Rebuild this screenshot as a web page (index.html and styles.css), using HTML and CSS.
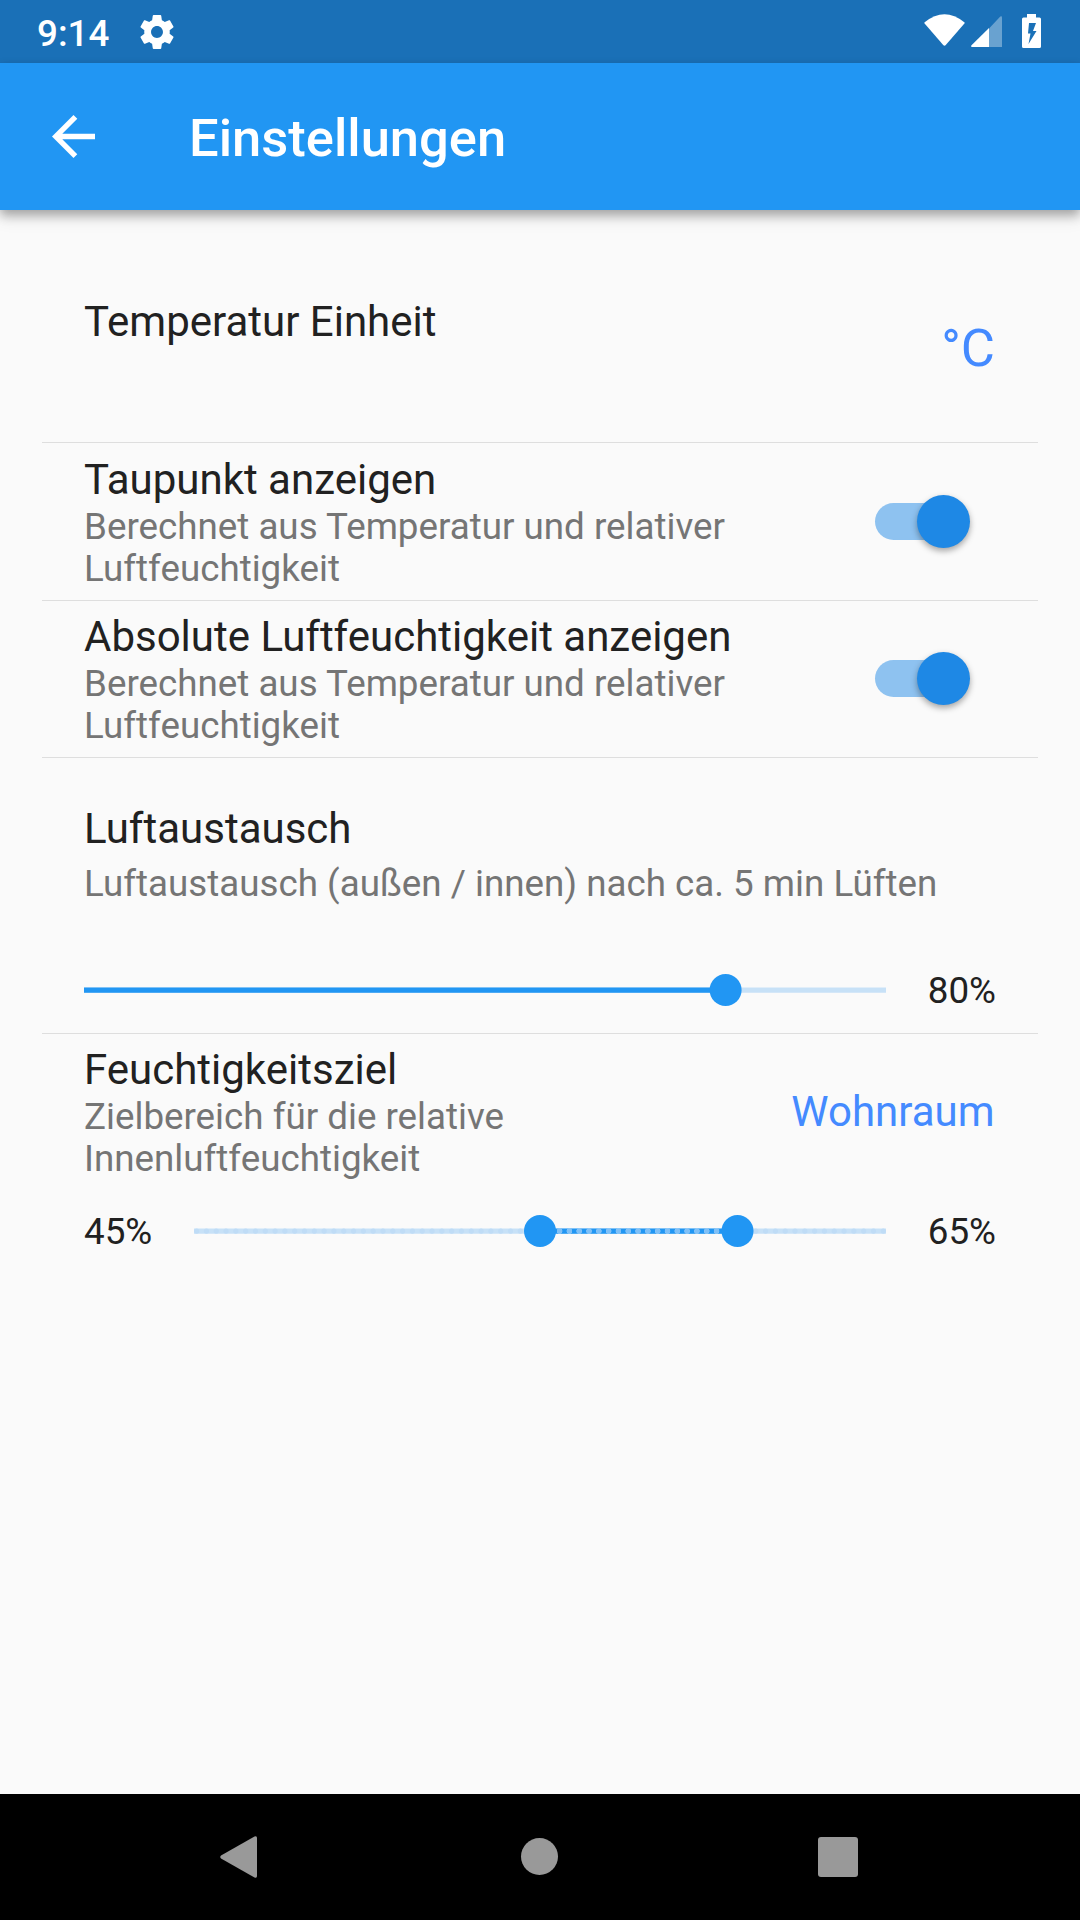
FILE: index.html
```html
<!DOCTYPE html>
<html lang="de">
<head>
<meta charset="utf-8">
<title>Einstellungen</title>
<link rel="stylesheet" href="styles.css">
</head>
<body>
<div class="status-bar">
  <span class="clock">9:14</span>
  <svg class="gear" viewBox="2 2 20 20"><path fill="#fff" d="M19.43 12.98c.04-.32.07-.64.07-.98s-.03-.66-.07-.98l2.11-1.65c.19-.15.24-.42.12-.64l-2-3.46c-.12-.22-.39-.3-.61-.22l-2.49 1c-.52-.4-1.08-.73-1.69-.98l-.38-2.65C14.46 2.18 14.25 2 14 2h-4c-.25 0-.46.18-.49.42l-.38 2.65c-.61.25-1.17.59-1.69.98l-2.49-1c-.23-.09-.49 0-.61.22l-2 3.46c-.13.22-.07.49.12.64l2.11 1.65c-.04.32-.07.65-.07.98s.03.66.07.98l-2.11 1.65c-.19.15-.24.42-.12.64l2 3.46c.12.22.39.3.61.22l2.49-1c.52.4 1.08.73 1.69.98l.38 2.65c.03.24.24.42.49.42h4c.25 0 .46-.18.49-.42l.38-2.65c.61-.25 1.17-.59 1.69-.98l2.49 1c.23.09.49 0 .61-.22l2-3.46c.12-.22.07-.49-.12-.64l-2.11-1.65zM12 15.500c-1.930 0-3.500-1.570-3.500-3.500s1.570-3.500 3.500-3.500 3.500 1.570 3.500 3.500-1.570 3.500-3.500 3.500z"/></svg>
  <svg class="wifi" viewBox="0 0 41 32"><path fill="#fff" d="M.7 8.200Q20.500-7.800 40.300 8.200Q41 8.800 40.400 9.600L21.800 31Q20.500 32.300 19.200 31L.6 9.600Q0 8.800.7 8.200Z"/></svg>
  <svg class="signal" viewBox="0 0 31 31"><path fill="#fff" fill-opacity=".35" d="M18 12.500L29.300 .5Q31-.5 31 1.500V31H18Z"/><path fill="#fff" d="M18 12V31H1Q-.6 30.500.5 29.300Z"/></svg>
  <svg class="battery" viewBox="0 0 19 34"><path fill="#fff" fill-rule="evenodd" d="M5 0H14V3.500H17.500Q19 3.500 19 5V32.500Q19 34 17.500 34H1.500Q0 34 0 32.500V5Q0 3.500 1.500 3.500H5ZM7 9L6 19.500H8.500L6.500 30L14.500 17H11L14 9Z"/></svg>
</div>
<header class="app-bar">
  <svg class="back" viewBox="4 4 16 16"><path fill="#fff" d="M20 11H7.830l5.590-5.590L12 4l-8 8 8 8 1.410-1.410L7.830 13H20v-2z"/></svg>
  <h1 class="page-title">Einstellungen</h1>
</header>
<main class="settings">
  <section class="row row-unit">
    <h2 class="title">Temperatur Einheit</h2>
    <span class="value value-unit">°C</span>
  </section>
  <section class="row row-toggle">
    <div class="text">
      <h2 class="title">Taupunkt anzeigen</h2>
      <p class="subtitle">Berechnet aus Temperatur und relativer Luftfeuchtigkeit</p>
    </div>
    <div class="switch"><span class="knob"></span></div>
  </section>
  <section class="row row-toggle row-absolute">
    <div class="text">
      <h2 class="title">Absolute Luftfeuchtigkeit anzeigen</h2>
      <p class="subtitle">Berechnet aus Temperatur und relativer Luftfeuchtigkeit</p>
    </div>
    <div class="switch"><span class="knob"></span></div>
  </section>
  <section class="row row-exchange">
    <h2 class="title">Luftaustausch</h2>
    <p class="subtitle">Luftaustausch (außen / innen) nach ca. 5 min Lüften</p>
    <div class="slider-line">
      <svg class="slider" viewBox="0 0 802 32"><path class="track" d="M0 16H802"/><path class="track-on" d="M0 16H642"/><circle class="thumb" cx="641.600" cy="16" r="16"/></svg>
      <span class="percent percent-end">80%</span>
    </div>
  </section>
  <section class="row row-target">
    <div class="target-head">
      <div class="text">
        <h2 class="title">Feuchtigkeitsziel</h2>
        <p class="subtitle">Zielbereich für die relative Innenluftfeuchtigkeit</p>
      </div>
      <span class="value value-room">Wohnraum</span>
    </div>
    <div class="slider-line">
      <span class="percent percent-start">45%</span>
      <svg class="slider slider-range" viewBox="0 0 692 32"><path class="track" d="M0 16H692"/><path class="track-on" d="M346 16H543"/><path class="ticks ticks-off" d="M2.600 16H690"/><path class="ticks" d="M346 16H543"/><circle class="thumb" cx="346" cy="16" r="16"/><circle class="thumb" cx="543.500" cy="16" r="16"/></svg>
      <span class="percent percent-end">65%</span>
    </div>
  </section>
</main>
<nav class="nav-bar">
  <svg class="nav-icon" viewBox="0 0 42 42"><path fill="#999" d="M1 19.500L34.500 .5Q37-.5 37 2V40Q37 42.500 34.500 41.500L1 22.500Q-.5 21 1 19.500Z"/></svg>
  <svg class="nav-icon" viewBox="0 0 42 42"><circle fill="#999" cx="20.500" cy="20.500" r="18.500"/></svg>
  <svg class="nav-icon" viewBox="0 0 42 42"><rect fill="#999" x="0" y="1" width="40" height="40" rx="3"/></svg>
</nav>
</body>
</html>
```
FILE: styles.css
```css
* { box-sizing: border-box; margin: 0; padding: 0; }
body {
  width: 1080px;
  height: 1920px;
  display: flex;
  flex-direction: column;
  background: #fafafa;
  color: #212121;
  font-family: Roboto, sans-serif;
  overflow: hidden;
}
svg { display: block; flex: none; }

.status-bar {
  height: 63px;
  flex: none;
  display: flex;
  align-items: flex-start;
  padding: 0 39px 0 37px;
  background: #1a70b7;
  color: #fff;
}
.clock { width: 103px; margin-top: 13px; font-size: 36.75px; line-height: 42px; font-weight: 500; }
.gear { width: 34px; height: 34px; margin-top: 15px; }
.wifi { width: 41px; height: 32px; margin: 14px 6px 0 auto; }
.signal { width: 31px; height: 31px; margin: 16px 20px 0 0; }
.battery { width: 19px; height: 34px; margin-top: 14px; }

.app-bar {
  height: 147px;
  flex: none;
  display: flex;
  align-items: center;
  padding-left: 52px;
  background: #2196f3;
  color: #fff;
  box-shadow: 0 5px 10px rgba(0, 0, 0, .3), 0 10px 15px rgba(0, 0, 0, .08);
}
.back { width: 43px; height: 43px; margin-right: 94px; }
.page-title { font-size: 52.5px; line-height: 62px; font-weight: 500; padding-top: 2px; }

.settings { flex: 1; padding: 0 42px; }
.row { padding: 0 42px; border-bottom: 1px solid #dedede; }
.row:last-child { border-bottom: 0; }
.title { font-size: 42px; line-height: 50px; font-weight: 400; }
.subtitle { font-size: 36.75px; line-height: 42px; padding-top: 1px; color: #757575; }
.value { margin-right: 1.5px; color: #448aff; font-size: 42px; line-height: 50px; }
.value-room { padding-bottom: 2px; }

.row-unit { height: 233px; display: flex; justify-content: space-between; padding-top: 87px; }
.value-unit { font-size: 52.5px; line-height: 62px; margin-top: 20px; margin-right: 1px; }

.row-toggle { height: 158px; display: flex; justify-content: space-between; padding-top: 12px; }
.row-absolute { height: 157px; padding-top: 11px; }
.row-toggle .text { width: 700px; }
.switch { width: 95px; height: 53px; display: flex; align-items: center; justify-content: flex-end; margin: 40px 26px 0 0; }
.switch::before { content: ""; width: 74px; height: 37px; border-radius: 19px; background: #8ec2f0; margin-right: -32px; }
.knob { width: 53px; height: 53px; flex: none; border-radius: 50%; background: #1e88e5; box-shadow: 0 3px 6px rgba(0, 0, 0, .35); z-index: 1; }

.row-exchange { height: 276px; padding-top: 46px; }
.row-exchange .subtitle { margin-top: 8px; }
.row-exchange .slider-line { margin-top: 64px; }
.slider-line { height: 42px; display: flex; align-items: center; justify-content: space-between; }
.slider { width: 802px; height: 32px; overflow: visible; }
.slider-range { width: 692px; margin-left: auto; }
.track { stroke: #c7e1f7; stroke-width: 5.25; }
.track-on { stroke: #2196f3; stroke-width: 5.25; }
.thumb { fill: #2196f3; }
.percent { padding-top: 1px; font-size: 36.75px; line-height: 42px; }
.percent-end { width: 110px; text-align: right; }
.ticks { stroke: #7fc0f7; stroke-width: 5.25; stroke-linecap: round; stroke-dasharray: 0 9.81; }
.ticks-off { stroke: #bfdcf6; }

.row-target { padding-top: 11px; }
.target-head { display: flex; justify-content: space-between; align-items: center; }
.target-head .text { width: 500px; }
.row-target .slider-line { margin-top: 30px; }

.nav-bar { height: 126px; flex: none; display: flex; justify-content: space-between; align-items: center; padding: 0 220px; background: #000; }
.nav-icon { width: 42px; height: 42px; }
```
